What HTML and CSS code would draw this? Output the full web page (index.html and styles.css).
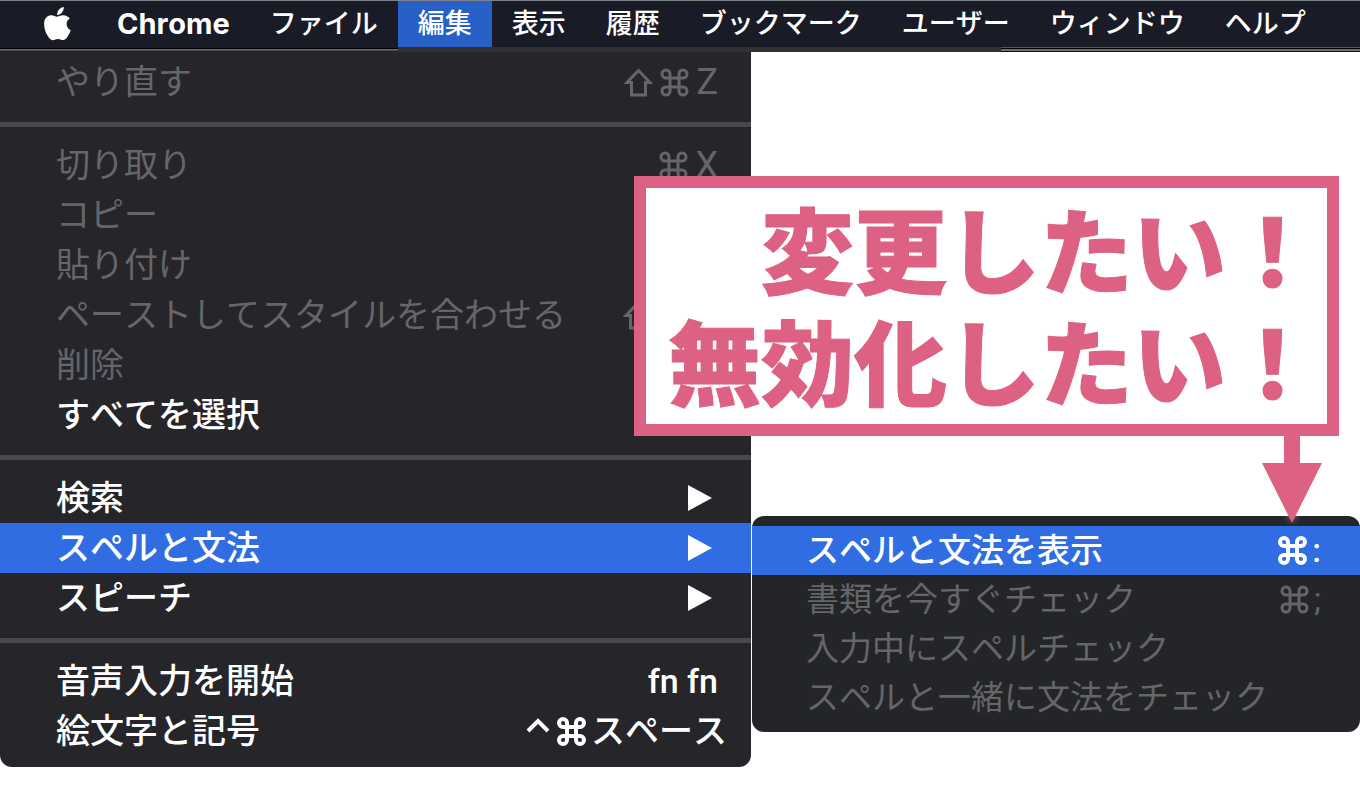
FILE: index.html
```html
<!DOCTYPE html>
<html lang="ja">
<head>
<meta charset="utf-8">
<meta name="viewport" content="width=device-width, initial-scale=1">
<title>Chrome 編集メニュー</title>
<link rel="stylesheet" href="styles.css">
</head>
<body>
<svg class="symbols" aria-hidden="true">
  <symbol id="command" viewBox="0 0 29 29"><path d="M10 6a4 4 0 1 0-4 4H23a4 4 0 1 0-4-4V23a4 4 0 1 0 4-4H6a4 4 0 1 0 4 4z"/></symbol>
  <symbol id="shift" viewBox="0 0 29 29"><path d="M14.500 2.500L26 14.500H21.500V27H7.500V14.500H3z"/></symbol>
  <symbol id="control" viewBox="0 0 24 29"><path d="M2 14L12 4L22 14"/></symbol>
  <symbol id="expand" viewBox="0 0 24 26"><path d="M0 0L24 13L0 26z"/></symbol>
</svg>

<header class="menubar">
  <div class="bar-items">
    <button class="bar-item bar-apple" type="button" aria-label="Apple">
      <svg class="apple" viewBox="0 0 27 34" aria-hidden="true"><path d="M19.8 0c.2 2-.6 4-1.800 5.500-1.200 1.500-3 2.500-4.800 2.400-.2-2 .7-4 1.800-5.300C16.300 1.100 18.200.1 19.800 0zM25.900 11.600c-2 1.200-3.300 3-3.300 5.500 0 3 1.700 5.200 4.200 6.200-.7 2.100-1.700 4.100-3 6-1.300 1.900-2.600 3.800-4.700 3.800-2.100.1-2.700-1.200-5.100-1.200-2.400 0-3.100 1.200-5.100 1.300-2 .1-3.600-2-4.900-3.900C1.300 25.500-.7 18.500.400 14.100 1.300 10.600 4.100 8.300 7.200 8.300c2.300-.1 4.300 1.400 5.700 1.400 1.400 0 3.700-1.700 6.500-1.500 2.500.1 4.900 1.200 6.500 3.400z"/></svg>
    </button>
    <button class="bar-item bar-app" type="button">Chrome</button>
    <button class="bar-item" type="button">ファイル</button>
    <button class="bar-item is-open" type="button" aria-expanded="true">編集</button>
    <button class="bar-item" type="button">表示</button>
    <button class="bar-item" type="button">履歴</button>
    <button class="bar-item" type="button">ブックマーク</button>
    <button class="bar-item" type="button">ユーザー</button>
    <button class="bar-item" type="button">ウィンドウ</button>
    <button class="bar-item" type="button">ヘルプ</button>
  </div>
  <div class="bar-edge">
    <span class="edge-left"></span>
    <span class="edge-middle"></span>
    <span class="edge-right"></span>
  </div>
</header>

<main class="workspace">
  <nav class="menu" aria-label="編集">
    <button class="item" type="button" disabled><span>やり直す</span><span class="keys"><svg class="key"><use href="#shift"/></svg><svg class="key"><use href="#command"/></svg><span class="letter">Z</span></span></button>
    <hr class="separator">
    <button class="item" type="button" disabled><span>切り取り</span><span class="keys"><svg class="key"><use href="#command"/></svg><span class="letter">X</span></span></button>
    <button class="item" type="button" disabled>コピー</button>
    <button class="item" type="button" disabled>貼り付け</button>
    <button class="item" type="button" disabled><span>ペーストしてスタイルを合わせる</span><span class="keys keys-covered"><svg class="key"><use href="#shift"/></svg></span></button>
    <button class="item" type="button" disabled>削除</button>
    <button class="item" type="button">すべてを選択</button>
    <hr class="separator">
    <button class="item" type="button"><span>検索</span><svg class="expand" aria-hidden="true"><use href="#expand"/></svg></button>
    <button class="item is-active" type="button" aria-expanded="true"><span>スペルと文法</span><svg class="expand" aria-hidden="true"><use href="#expand"/></svg></button>
    <button class="item" type="button"><span>スピーチ</span><svg class="expand" aria-hidden="true"><use href="#expand"/></svg></button>
    <hr class="separator">
    <button class="item" type="button"><span>音声入力を開始</span><span class="keys">fn fn</span></button>
    <button class="item item-wide" type="button"><span>絵文字と記号</span><span class="keys"><svg class="key key-control"><use href="#control"/></svg><svg class="key key-tight"><use href="#command"/></svg>スペース</span></button>
  </nav>

  <nav class="submenu" aria-label="スペルと文法">
    <button class="item is-active" type="button"><span>スペルと文法を表示</span><span class="keys"><svg class="key key-tight"><use href="#command"/></svg>:</span></button>
    <button class="item" type="button" disabled><span>書類を今すぐチェック</span><span class="keys"><svg class="key key-tight"><use href="#command"/></svg>;</span></button>
    <button class="item" type="button" disabled>入力中にスペルチェック</button>
    <button class="item" type="button" disabled>スペルと一緒に文法をチェック</button>
  </nav>

  <aside class="callout">
    <p class="callout-line">変更したい！</p>
    <p class="callout-line">無効化したい！</p>
    <svg class="pointer" viewBox="0 0 60 87" aria-hidden="true"><path d="M22 0H38V27H60L30 87L0 27H22z"/></svg>
  </aside>
</main>
</body>
</html>
```
FILE: styles.css
```css
* {
  box-sizing: border-box;
}

body {
  margin: 0;
  background: #fff;
  font-family: Roboto, "Noto Sans CJK JP", sans-serif;
  font-kerning: none;
}

button {
  margin: 0;
  border: 0;
  background: none;
  color: inherit;
  font: inherit;
  font-kerning: none;
  text-align: left;
  white-space: nowrap;
}

.symbols {
  display: none;
}

.menubar {
  border-top: 1px solid #7d8288;
  background: #191b27;
  color: #fff;
  font-size: 27px;
  font-weight: 500;
}

.bar-items {
  display: flex;
  align-items: stretch;
  height: 46px;
  padding-left: 24px;
}

.bar-item {
  padding: 0 20px;
  line-height: 46px;
}

.bar-apple {
  display: flex;
  align-items: center;
  padding-right: 26px;
}

.apple {
  width: 27px;
  height: 34px;
  fill: #fff;
}

.bar-app {
  font-family: Inter, sans-serif;
  font-size: 29px;
  font-weight: 700;
}

.bar-item.is-open {
  background: #2860c8;
}

.bar-edge {
  display: flex;
  height: 5px;
}

.edge-left {
  width: 29.3%;
  background: linear-gradient(#191b27 1px, #000 1px 2px, #6c6c70 2px 3px, #4a4a4e 3px 4px, #26262a 4px);
}

.edge-middle {
  width: 44.3%;
  background: #303036;
}

.edge-right {
  flex: 1;
  background: linear-gradient(#4b585c 1px, #000 1px 2px, #6f6f72 2px 4px, #111 4px);
}

.workspace {
  position: relative;
}

.menu {
  width: 55.22%;
  padding: 5px 0 11px;
  border-radius: 0 0 12px 12px;
  background: #26262a;
  font-size: 34px;
}

.item {
  display: flex;
  align-items: center;
  justify-content: space-between;
  width: 100%;
  height: 50px;
  padding: 0 33px 0 56px;
  color: #fff;
  font-weight: 500;
  line-height: 50px;
}

.item:disabled {
  color: #65656a;
  font-weight: 400;
}

.item.is-active {
  background: #306de2;
}

.item-wide {
  padding-right: 24px;
}

.keys {
  display: flex;
  align-items: center;
}

.keys-covered {
  padding-right: 59px;
}

.key {
  width: 29px;
  height: 29px;
  margin-right: 7px;
  fill: none;
  stroke: currentColor;
  stroke-width: 3px;
}

.item:not(:disabled) .key {
  stroke-width: 4px;
}

.key-control {
  width: 24px;
}

.key-tight {
  margin-right: 5px;
}

.letter {
  font-size: 36px;
}

.separator {
  height: 5px;
  margin: 15px 0 13px;
  border: 0;
  background: #49494d;
}

.expand {
  width: 24px;
  height: 26px;
  margin-right: 6px;
  fill: #fff;
}

.submenu {
  position: absolute;
  top: 464px;
  right: 0;
  left: 55.3%;
  padding: 10px 0;
  border-radius: 12px;
  background: #242529;
  font-size: 33px;
}

.submenu .item {
  height: 49px;
  padding: 0 39px 0 54px;
  line-height: 49px;
}

.callout {
  position: absolute;
  top: 124px;
  right: 21px;
  padding: 3px 8px 9px 22px;
  border: 12px solid #dd6183;
  background: #fff;
  color: #dd6183;
  font-family: "Noto Sans CJK JP", sans-serif;
  font-size: 93px;
  font-weight: 900;
  line-height: 112px;
  text-align: right;
  white-space: nowrap;
}

.callout-line {
  margin: 0;
  -webkit-text-stroke: 1px #dd6183;
}

.pointer {
  position: absolute;
  top: 100%;
  right: 5px;
  width: 60px;
  height: 87px;
  margin-top: 12px;
  overflow: visible;
  fill: #dd6183;
  filter: drop-shadow(0 0 3px rgba(255, 255, 255, 0.4));
  clip-path: inset(0 -10px -10px);
}
```
